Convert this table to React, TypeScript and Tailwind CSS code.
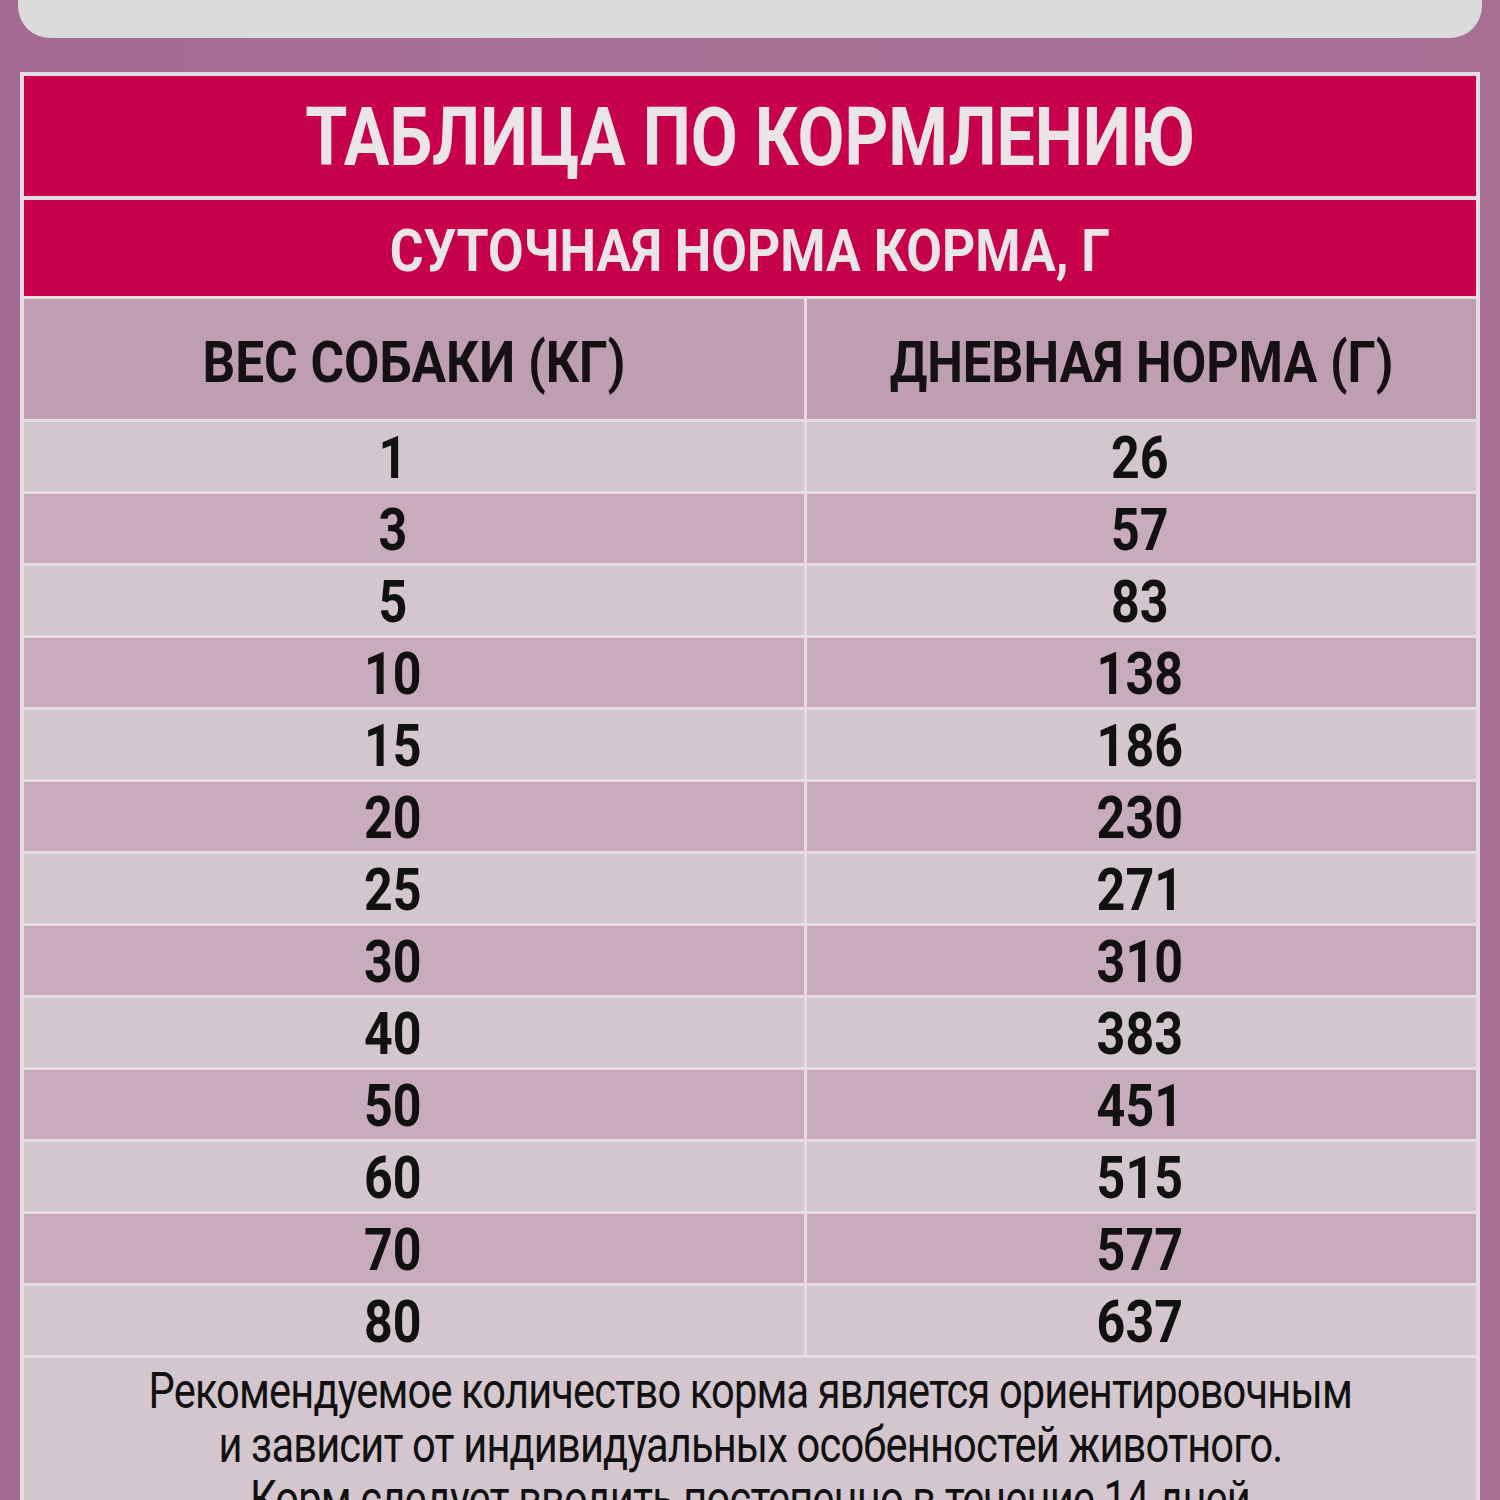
import React from 'react';

const rows: [string, string][] = [
  ['1', '26'],
  ['3', '57'],
  ['5', '83'],
  ['10', '138'],
  ['15', '186'],
  ['20', '230'],
  ['25', '271'],
  ['30', '310'],
  ['40', '383'],
  ['50', '451'],
  ['60', '515'],
  ['70', '577'],
  ['80', '637'],
];

const font = { fontFamily: 'Roboto, "Liberation Sans", sans-serif' };

function Squeeze({ children, className = '' }: { children: React.ReactNode; className?: string }) {
  return <span className={`inline-block origin-center whitespace-nowrap ${className}`}>{children}</span>;
}

export default function App() {
  return (
    <div className="w-[1500px] h-[1500px] overflow-hidden bg-[#a77095] bg-gradient-to-r from-[#a46a92] via-[#a87297] to-[#a86f95]" style={font}>
      {/* top card, cut off */}
      <div className="mx-[18px] h-[38px] rounded-b-[32px] bg-[#dcdbdb]" />

      {/* feeding table */}
      <div className="mt-[34px] mx-[20px] border-[4px] border-[#e4dce1] bg-[#e4dce1] flex flex-col gap-[4px]">
        <div className="h-[120px] bg-[#c6004b] flex items-center justify-center">
          <Squeeze className="scale-x-[0.83] text-[82px] font-bold leading-none text-[#ece5e8] pt-[2px]">ТАБЛИЦА ПО КОРМЛЕНИЮ</Squeeze>
        </div>
        <div className="h-[96px] bg-[#c6004b] flex items-center justify-center">
          <Squeeze className="scale-x-[0.862] text-[60px] font-bold leading-none text-[#ece5e8] pt-[6px]">СУТОЧНАЯ НОРМА КОРМА, Г</Squeeze>
        </div>

        <div className="flex flex-col gap-[3px] -mt-[1px]">
          <div className="h-[120px] grid grid-cols-[780px_1fr] gap-[3px]">
            <div className="bg-[#bf9db3] flex items-center justify-center">
              <Squeeze className="scale-x-[0.885] text-[58px] font-bold leading-none text-[#141014] pt-[6px]">ВЕС СОБАКИ (КГ)</Squeeze>
            </div>
            <div className="bg-[#bf9db3] flex items-center justify-center">
              <Squeeze className="scale-x-[0.87] text-[58px] font-bold leading-none text-[#141014] pt-[6px]">ДНЕВНАЯ НОРМА (Г)</Squeeze>
            </div>
          </div>

          {rows.map(([kg, g], i) => {
            const bg = i % 2 === 0 ? 'bg-[#d3c6cf]' : 'bg-[#c8acbd]';
            return (
              <div key={kg} className="h-[69px] grid grid-cols-[780px_1fr] gap-[3px]">
                <div className={`${bg} flex items-center justify-center pr-[42px] pt-[2px]`}>
                  <Squeeze className="scale-x-[0.85] text-[59px] font-bold leading-none text-[#111]">{kg}</Squeeze>
                </div>
                <div className={`${bg} flex items-center justify-center pt-[2px] pr-[4px]`}>
                  <Squeeze className="scale-x-[0.85] text-[59px] font-bold leading-none text-[#111]">{g}</Squeeze>
                </div>
              </div>
            );
          })}
        </div>

        {/* note */}
        <div className="-mt-[1px] bg-[#d3c6cf] pt-[6px] pb-[40px] flex flex-col items-center text-[50px] leading-[54px] text-[#111] tracking-[-1px]">
          <Squeeze className="scale-x-[0.832]">Рекомендуемое количество корма является ориентировочным</Squeeze>
          <Squeeze className="scale-x-[0.832]">и зависит от индивидуальных особенностей животного.</Squeeze>
          <Squeeze className="scale-x-[0.832]">Корм следует вводить постепенно в течение 14 дней</Squeeze>
        </div>
      </div>
    </div>
  );
}
